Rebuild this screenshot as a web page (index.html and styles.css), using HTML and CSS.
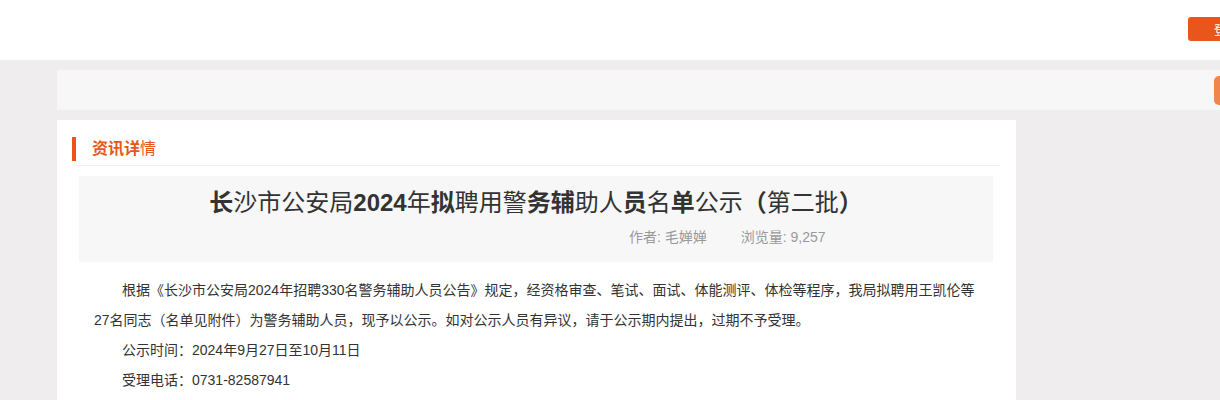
FILE: index.html
```html
<!DOCTYPE html>
<html lang="zh-CN">

<head>
    <meta charset="UTF-8">
    <meta name="viewport" content="width=device-width, initial-scale=1.0">
    <link rel="stylesheet" href="styles.css">
    <title>资讯详情</title>
</head>

<body>

    <div class="top-header">
        <button class="login-btn">登录</button>
    </div>

    <div class="page">
        <div class="nav-bar">
            <span class="nav-tag"></span>
        </div>

        <div class="news-card">
            <div class="card-heading">
                <span class="heading-mark"></span>
                <h3><b>资讯详</b>情</h3>
            </div>

            <div class="title-box">
                <h1><b>长</b>沙市公安局<b>2024</b>年<b>拟</b>聘用警<b>务辅</b>助人<b>员</b>名<b>单</b>公示<b>（</b>第二批<b>）</b></h1>
                <div class="meta">
                    <span>作者: 毛婵婵</span>
                    <span>浏览量: 9,257</span>
                </div>
            </div>

            <div class="article">
                <p class="indent">根据《长沙市公安局2024年招聘330名警务辅助人员公告》规定，经资格审查、笔试、面试、体能测评、体检等程序，我局拟聘用王凯伦等27名同志（名单见附件）为警务辅助人员，现予以公示。如对公示人员有异议，请于公示期内提出，过期不予受理。</p>
                <p class="indent">公示时间：2024年9月27日至10月11日</p>
                <p class="indent">受理电话：0731-82587941</p>
            </div>
        </div>
    </div>

</body>

</html>
```

FILE: styles.css
```css
body {
    font-family: 'Liberation Sans', 'Noto Sans CJK SC', sans-serif;
    background-color: #efeded;
    margin: 0;
    overflow: hidden;
    height: 100vh;
}

.top-header {
    height: 60px;
    background-color: #fff;
    display: flex;
    align-items: flex-start;
    justify-content: flex-end;
}

.login-btn {
    background-color: #e9561b;
    color: #fff;
    border: none;
    border-radius: 3px;
    height: 24px;
    width: 62px;
    margin-top: 17px;
    margin-right: -30px;
    padding: 0 0 0 26px;
    font-family: inherit;
    font-size: 12px;
    text-align: left;
    cursor: pointer;
}

.page {
    padding: 10px 0 0 57px;
}

.nav-bar {
    height: 40px;
    width: 1200px;
    background-color: #f7f7f7;
    display: flex;
    align-items: center;
    padding-left: 1157px;
    box-sizing: border-box;
}

.nav-tag {
    width: 30px;
    height: 29px;
    border-radius: 5px;
    background-color: #f0864e;
}

.news-card {
    width: 959px;
    margin-top: 10px;
    background-color: #fff;
    padding-top: 17px;
    height: 400px;
}

.card-heading {
    display: flex;
    align-items: center;
    margin: 0 16px 0 18px;
    padding-bottom: 4px;
    border-bottom: 1px solid #f0f0f0;
}

.heading-mark {
    width: 4px;
    height: 24px;
    background-color: #e9561b;
    margin-left: -3px;
    margin-right: 16px;
}

.card-heading h3 {
    margin: 0;
    font-size: 16px;
    font-weight: normal;
    color: #e9561b;
    line-height: 22px;
}

.title-box {
    margin: 10px 23px 0 22px;
    background-color: #f7f7f7;
    padding: 11px 0 15px;
}

.title-box h1 {
    margin: 0;
    text-align: center;
    font-size: 24px;
    line-height: 32px;
    font-weight: normal;
    color: #333;
}

.meta {
    display: flex;
    gap: 34px;
    padding-left: 550px;
    margin-top: 8px;
    font-size: 14px;
    line-height: 20px;
    color: #999;
}

.article {
    padding: 13px 37px 0;
    font-size: 14px;
    line-height: 30px;
    color: #333;
}

.article p {
    margin: 0;
}

.indent {
    text-indent: 2em;
}
```
